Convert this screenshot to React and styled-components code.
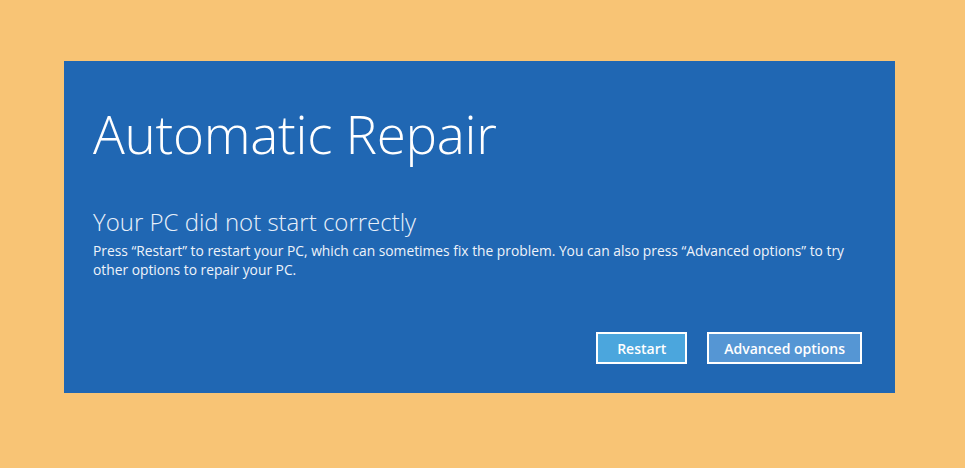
import React from "react";
import styled, { createGlobalStyle } from "styled-components";

const GlobalStyle = createGlobalStyle`
  html, body {
    margin: 0;
    padding: 0;
    background: #f8c475;
  }
  body {
    width: 965px;
    height: 468px;
    overflow: hidden;
    font-family: "Open Sans", "Noto Sans", sans-serif;
  }
`;

const App = () => {
  return (
    <Page>
      <GlobalStyle />
      <Panel>
        <Title>Automatic Repair</Title>
        <Subtitle>Your PC did not start correctly</Subtitle>
        <Message>
          Press “Restart” to restart your PC, which can sometimes fix the
          problem. You can also press “Advanced options” to try other options
          to repair your PC.
        </Message>
        <Actions>
          <Button $primary>Restart</Button>
          <Button>Advanced options</Button>
        </Actions>
      </Panel>
    </Page>
  );
};

export default App;

const Page = styled.div`
  padding: 61px 0 0 64px;
`;

const Panel = styled.div`
  box-sizing: border-box;
  width: 831px;
  height: 332px;
  background: #2067b3;
  color: #ffffff;
  padding: 38px 33px 0 29px;
  display: flex;
  flex-direction: column;
`;

const Title = styled.h1`
  margin: 0;
  font-family: "Open Sans", sans-serif;
  font-weight: 300;
  font-size: 53px;
  line-height: 70px;
  letter-spacing: -0.3px;
`;

const Subtitle = styled.h2`
  margin: 38px 0 0;
  font-family: "Open Sans", sans-serif;
  font-weight: 300;
  font-size: 24px;
  line-height: 30px;
  color: #e8f0fa;
`;

const Message = styled.p`
  margin: 4px 0 0;
  width: 760px;
  font-family: "Open Sans", sans-serif;
  font-size: 13.8px;
  line-height: 19px;
  color: #eef3fa;
`;

const Actions = styled.div`
  margin-top: auto;
  margin-bottom: 29px;
  display: flex;
  justify-content: flex-end;
  gap: 20px;
`;

const Button = styled.button`
  box-sizing: border-box;
  height: 32px;
  min-width: 91px;
  padding: 0 15px;
  border: 2px solid #ffffff;
  background: ${(p) => (p.$primary ? "#4ba6dd" : "#5596d4")};
  color: #ffffff;
  font-family: "Open Sans", sans-serif;
  font-weight: 600;
  font-size: 14px;
  cursor: pointer;
`;
